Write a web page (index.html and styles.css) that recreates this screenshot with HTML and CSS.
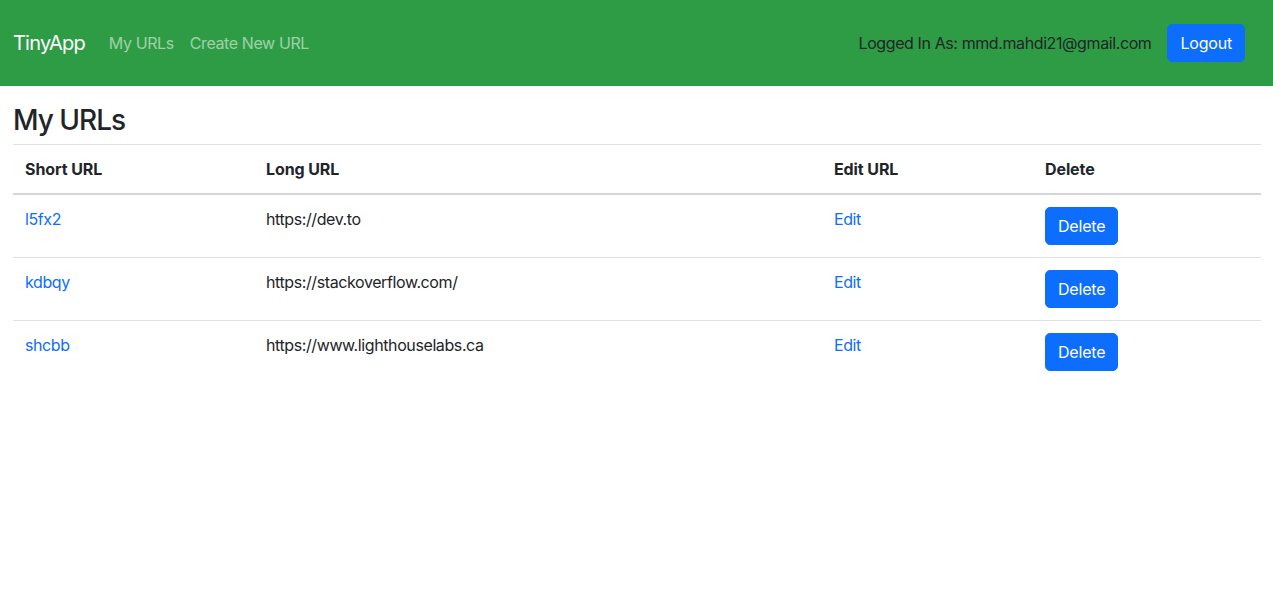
FILE: index.html
```html
<!DOCTYPE html>
<html lang="en">
<head>
<meta charset="utf-8">
<title>TinyApp</title>
<link rel="stylesheet" href="styles.css">
</head>
<body>
<nav class="navbar">
  <div class="nav-left">
    <a class="brand" href="#">TinyApp</a>
    <a class="nav-link" href="#">My URLs</a>
    <a class="nav-link" href="#">Create New URL</a>
  </div>
  <div class="nav-right">
    <span class="user">Logged In As: mmd.mahdi21@gmail.com</span>
    <button class="btn">Logout</button>
  </div>
</nav>
<main class="container">
  <h3 class="title">My URLs</h3>
  <table class="table">
    <colgroup>
      <col class="c1"><col class="c2"><col class="c3"><col class="c4">
    </colgroup>
    <thead>
      <tr><th>Short URL</th><th>Long URL</th><th>Edit URL</th><th>Delete</th></tr>
    </thead>
    <tbody>
      <tr><td><a href="#">l5fx2</a></td><td>https://dev.to</td><td><a href="#">Edit</a></td><td><button class="btn">Delete</button></td></tr>
      <tr><td><a href="#">kdbqy</a></td><td>https://stackoverflow.com/</td><td><a href="#">Edit</a></td><td><button class="btn">Delete</button></td></tr>
      <tr><td><a href="#">shcbb</a></td><td>https://www.lighthouselabs.ca</td><td><a href="#">Edit</a></td><td><button class="btn">Delete</button></td></tr>
    </tbody>
  </table>
</main>
</body>
</html>
```
FILE: styles.css
```css
* { box-sizing: border-box; }
body {
  margin: 0;
  font-family: Inter, "Liberation Sans", sans-serif;
  font-size: 16px;
  line-height: 1.5;
  letter-spacing: -0.4px;
  color: #212529;
  background: #fff;
}
a { color: #0d6efd; text-decoration: none; }
.navbar {
  height: 86px;
  background: #2e9c45;
  display: flex;
  align-items: center;
  justify-content: space-between;
  padding: 0 28px 0 13px;
}
.nav-left { display: flex; align-items: center; }
.brand { color: #fff; font-size: 20px; letter-spacing: -0.8px; margin-right: 24px; }
.nav-link { color: rgba(255,255,255,0.55); margin-right: 16px; }
.nav-right { display: flex; align-items: center; gap: 16px; }
.user { color: #212529; }
.btn {
  font-family: inherit;
  font-size: 16px;
  line-height: 24px;
  letter-spacing: -0.2px;
  padding: 6px 12px;
  background: #0d6efd;
  color: #fff;
  border: 1px solid #0d6efd;
  border-radius: 5px;
}
.container { padding: 0 12px 0 13px; }
.title {
  font-size: 28px;
  font-weight: 500;
  line-height: 1.2;
  letter-spacing: -1px;
  margin: 18px 0 6px;
}
.table { width: 100%; border-collapse: collapse; }
.c1 { width: 241px; }
.c2 { width: 568px; }
.c3 { width: 211px; }
.c4 { width: 228px; }
.table th, .table td {
  text-align: left;
  vertical-align: top;
  padding: 12px;
  border-bottom: 1px solid #dee2e6;
}
.table th { font-weight: 700; letter-spacing: -0.1px; }
.table thead tr { border-top: 1px solid #dee2e6; }
.table thead th { border-bottom: 2px solid #d3d7db; }
.table tbody tr:last-child td { border-bottom: 0; }
```
